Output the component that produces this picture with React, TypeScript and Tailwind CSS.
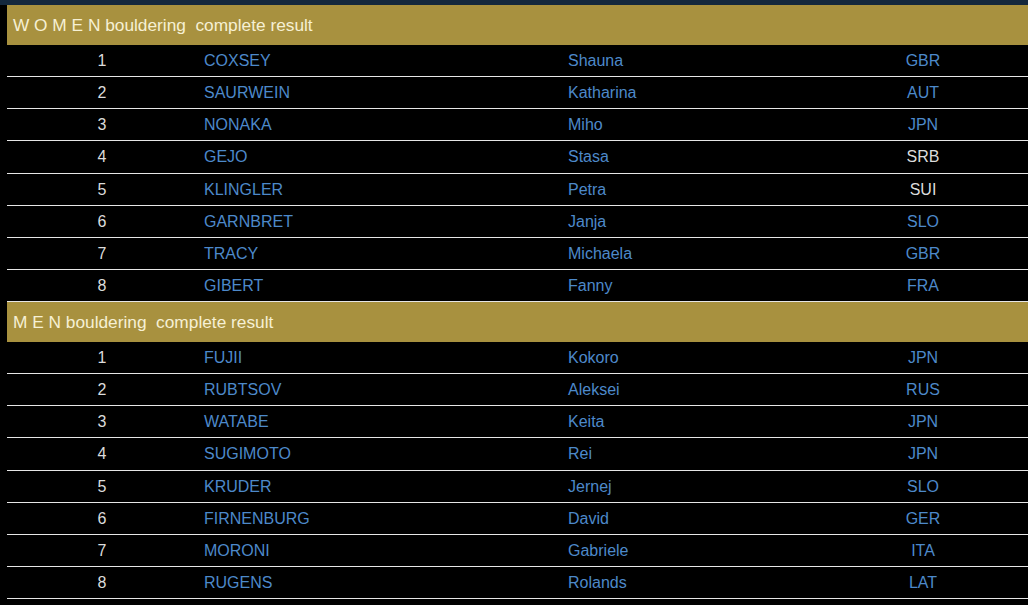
type Row = { rank: number; last: string; first: string; nat: string; natLink?: boolean };

const women: Row[] = [
  { rank: 1, last: "COXSEY", first: "Shauna", nat: "GBR" },
  { rank: 2, last: "SAURWEIN", first: "Katharina", nat: "AUT" },
  { rank: 3, last: "NONAKA", first: "Miho", nat: "JPN" },
  { rank: 4, last: "GEJO", first: "Stasa", nat: "SRB", natLink: false },
  { rank: 5, last: "KLINGLER", first: "Petra", nat: "SUI", natLink: false },
  { rank: 6, last: "GARNBRET", first: "Janja", nat: "SLO" },
  { rank: 7, last: "TRACY", first: "Michaela", nat: "GBR" },
  { rank: 8, last: "GIBERT", first: "Fanny", nat: "FRA" },
];

const men: Row[] = [
  { rank: 1, last: "FUJII", first: "Kokoro", nat: "JPN" },
  { rank: 2, last: "RUBTSOV", first: "Aleksei", nat: "RUS" },
  { rank: 3, last: "WATABE", first: "Keita", nat: "JPN" },
  { rank: 4, last: "SUGIMOTO", first: "Rei", nat: "JPN" },
  { rank: 5, last: "KRUDER", first: "Jernej", nat: "SLO" },
  { rank: 6, last: "FIRNENBURG", first: "David", nat: "GER" },
  { rank: 7, last: "MORONI", first: "Gabriele", nat: "ITA" },
  { rank: 8, last: "RUGENS", first: "Rolands", nat: "LAT" },
];

function Section({ title, rows }: { title: string; rows: Row[] }) {
  return (
    <div>
      <div className="h-10 bg-[#a8913f] flex items-center pl-[6px] pt-[2px] text-[17.3px] text-[#f6f0d4]">
        {title}
      </div>
      {rows.map((r) => (
        <div
          key={r.rank}
          className={
            r.rank === 4
              ? "h-[33px] grid grid-cols-[190px_364px_257px_1fr] items-center border-b border-[#e6e6e6] text-[16px]"
              : "h-8 grid grid-cols-[190px_364px_257px_1fr] items-center border-b border-[#e6e6e6] text-[16px]"
          }
        >
          <div className="text-center text-[#dcdcdc]">{r.rank}</div>
          <div className="pl-[7px] text-[#4d89ca]">{r.last}</div>
          <div className="pl-[7px] text-[#4d89ca]">{r.first}</div>
          <div className={r.natLink === false ? "text-center text-[#dcdcdc]" : "text-center text-[#4d89ca]"}>
            {r.nat}
          </div>
        </div>
      ))}
    </div>
  );
}

export default function App() {
  return (
    <div className="w-[1028px] h-[605px] bg-black overflow-hidden font-['Liberation_Sans',Arial,sans-serif]">
      <div className="h-[5px] bg-[#14283d]" />
      <div className="pl-[7px]">
        <Section title={"W O M E N bouldering\u00a0 complete result"} rows={women} />
        <Section title={"M E N bouldering\u00a0 complete result"} rows={men} />
      </div>
    </div>
  );
}
